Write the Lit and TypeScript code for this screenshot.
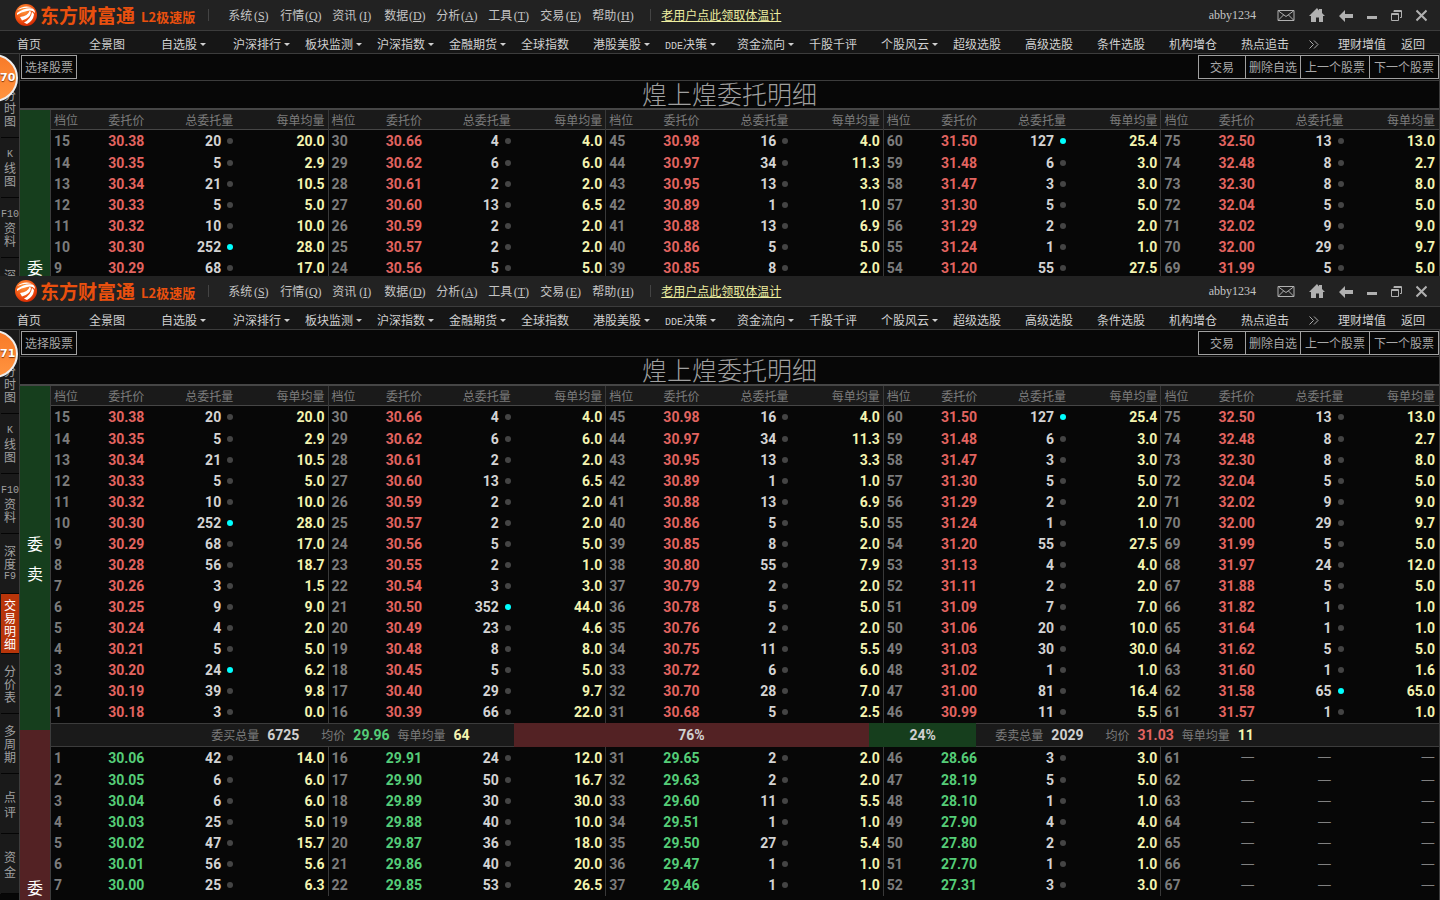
import { LitElement, html, css, svg, nothing } from "lit";
import { customElement, property } from "lit/decorators.js";
import { classMap } from "lit/directives/class-map.js";
import { styleMap } from "lit/directives/style-map.js";

type Quote = [level: number, price?: string, volume?: number, average?: string];

const parse = (start: number, step: number, text: string): Quote[] =>
  text.split(";").map((entry, i) => {
    const [price, volume, average] = entry.trim().split(" ");
    return [start + i * step, price, Number(volume), average];
  });

const SELL: Quote[][] = [
  parse(15, -1, "30.38 20 20.0;30.35 5 2.9;30.34 21 10.5;30.33 5 5.0;30.32 10 10.0;30.30 252 28.0;30.29 68 17.0;30.28 56 18.7;30.26 3 1.5;30.25 9 9.0;30.24 4 2.0;30.21 5 5.0;30.20 24 6.2;30.19 39 9.8;30.18 3 0.0"),
  parse(30, -1, "30.66 4 4.0;30.62 6 6.0;30.61 2 2.0;30.60 13 6.5;30.59 2 2.0;30.57 2 2.0;30.56 5 5.0;30.55 2 1.0;30.54 3 3.0;30.50 352 44.0;30.49 23 4.6;30.48 8 8.0;30.45 5 5.0;30.40 29 9.7;30.39 66 22.0"),
  parse(45, -1, "30.98 16 4.0;30.97 34 11.3;30.95 13 3.3;30.89 1 1.0;30.88 13 6.9;30.86 5 5.0;30.85 8 2.0;30.80 55 7.9;30.79 2 2.0;30.78 5 5.0;30.76 2 2.0;30.75 11 5.5;30.72 6 6.0;30.70 28 7.0;30.68 5 2.5"),
  parse(60, -1, "31.50 127 25.4;31.48 6 3.0;31.47 3 3.0;31.30 5 5.0;31.29 2 2.0;31.24 1 1.0;31.20 55 27.5;31.13 4 4.0;31.11 2 2.0;31.09 7 7.0;31.06 20 10.0;31.03 30 30.0;31.02 1 1.0;31.00 81 16.4;30.99 11 5.5"),
  parse(75, -1, "32.50 13 13.0;32.48 8 2.7;32.30 8 8.0;32.04 5 5.0;32.02 9 9.0;32.00 29 9.7;31.99 5 5.0;31.97 24 12.0;31.88 5 5.0;31.82 1 1.0;31.64 1 1.0;31.62 5 5.0;31.60 1 1.6;31.58 65 65.0;31.57 1 1.0"),
];

const BUY: Quote[][] = [
  parse(1, 1, "30.06 42 14.0;30.05 6 6.0;30.04 6 6.0;30.03 25 5.0;30.02 47 15.7;30.01 56 5.6;30.00 25 6.3"),
  parse(16, 1, "29.91 24 12.0;29.90 50 16.7;29.89 30 30.0;29.88 40 10.0;29.87 36 18.0;29.86 40 20.0;29.85 53 26.5"),
  parse(31, 1, "29.65 2 2.0;29.63 2 2.0;29.60 11 5.5;29.51 1 1.0;29.50 27 5.4;29.47 1 1.0;29.46 1 1.0"),
  parse(46, 1, "28.66 3 3.0;28.19 5 5.0;28.10 1 1.0;27.90 4 4.0;27.80 2 2.0;27.70 1 1.0;27.31 3 3.0"),
  [61, 62, 63, 64, 65, 66, 67].map((level): Quote => [level]),
];

const HOT_SELL_LEVELS = new Set([3, 10, 21, 60, 62]);
const BUY_TOTAL = 6725;
const SELL_TOTAL = 2029;

const MENUS = ["系统S", "行情Q", "资讯I", "数据D", "分析A", "工具T", "交易E", "帮助H"];

// A trailing "+" marks an entry that opens a submenu.
const NAV = [
  "首页", "全景图", "自选股+", "沪深排行+", "板块监测+", "沪深指数+", "金融期货+", "全球指数", "港股美股+",
  "DDE决策+", "资金流向+", "千股千评", "个股风云+", "超级选股", "高级选股", "条件选股", "机构增仓", "热点追击",
];

const TABS: string[][] = [
  ["分", "时", "图"], ["K", "线", "图"], ["F10", "资", "料"], ["深", "度", "F9"],
  ["交", "易", "明", "细"], ["分", "价", "表"], ["多", "周", "期"], ["点", "评"], ["资", "金"],
];
const ACTIVE_TAB = 4;

const WINDOW_ICONS = [
  { label: "邮件", w: 18, shape: svg`<path d="M1 1.500h16v10H1z M1.500 2L9 7.500 16.500 2 M6.500 6l-5 5 M11.500 6l5 5" transform="translate(0 1)"/>` },
  { label: "主页", w: 16, shape: svg`<path class="solid" d="M8 0L0 8h2v6h5V9.500h3V14h4V8h2l-3-3V1h-3v1.500z"/>` },
  { label: "后退", w: 14, shape: svg`<path class="solid" d="M0 8l6-6v4h8v4H6v4z"/>` },
  { label: "最小化", w: 10, shape: svg`<path class="solid" d="M0 8h10v3H0z"/>` },
  { label: "还原", w: 11, shape: svg`<path d="M.5 5.500h7v7h-7z M.5 6.500h7 M3 4V2.500h7.500v7H9 M3 3.500h7.500"/>` },
  { label: "关闭", w: 11, shape: svg`<path class="thick" d="M.5 2.500l10 10 M10.500 2.500l-10 10"/>` },
];

const sharedControls = css`
  button {
    appearance: none;
    margin: 0;
    padding: 0;
    border: 0;
    background: none;
    color: inherit;
    font: inherit;
  }
  a { color: inherit; text-decoration: none; }
`;

@customElement("quote-table")
class QuoteTable extends LitElement {
  @property({ attribute: false }) rows: Quote[] = [];
  @property() side: "sell" | "buy" = "sell";

  static styles = css`
    :host { display: block; min-width: 0; }
    table { width: 100%; border-collapse: separate; border-spacing: 0; table-layout: fixed; }
    th, td { box-sizing: border-box; padding: 0; text-align: right; white-space: nowrap; }
    th {
      height: 20px;
      border-bottom: 1px solid #464646;
      background: #1a1a1a;
      color: #7c7c7c;
      font-size: 12px;
      line-height: 18px;
      font-weight: 400;
    }
    td {
      height: 21px;
      font: 700 14px/21px Roboto, "Noto Sans CJK SC", sans-serif;
    }
    tr:first-child td { height: 23px; }
    .level { width: 15%; padding-left: 3px; text-align: left; }
    .price { width: 19%; padding-right: 1px; }
    .volume { width: 32%; padding-right: 1px; }
    .average { padding-right: 4px; }
    td.level { color: #7c7c7c; }
    td.price { color: #e26460; }
    .buy td.price { color: #55cd78; }
    td.volume { color: #d4d4d4; }
    td.average { color: #f4f4b0; }
    .empty td:not(.level) {
      color: #808080;
      font: 400 16px/17px "Noto Sans CJK SC", sans-serif;
      vertical-align: top;
    }
    .dot {
      display: inline-block;
      width: 6px;
      height: 6px;
      margin-left: 6px;
      border-radius: 3px;
      background: #444;
      vertical-align: 2px;
    }
    .dot.hot { background: #0ff; }
    .dot.none { background: none; }
  `;

  render() {
    const sell = this.side === "sell";
    return html`<table class=${this.side}>
      ${sell
        ? html`<thead><tr>
            <th class="level">档位</th><th class="price">委托价</th>
            <th class="volume">总委托量</th><th class="average">每单均量</th>
          </tr></thead>`
        : nothing}
      <tbody>
        ${this.rows.map(([level, price, volume, average]) => {
          const dot = { dot: true, hot: sell && HOT_SELL_LEVELS.has(level), none: !price };
          return html`<tr class=${price ? "" : "empty"}>
            <td class="level">${level}</td>
            <td class="price">${price ?? "—"}</td>
            <td class="volume">${price ? volume : "—"}<span class=${classMap(dot)}></span></td>
            <td class="average">${average ?? "—"}</td>
          </tr>`;
        })}
      </tbody>
    </table>`;
  }
}

@customElement("trade-window")
class TradeWindow extends LitElement {
  @property() badge = "";
  // The compact window lists only the topmost sell levels.
  @property({ type: Boolean }) compact = false;

  static styles = [
    sharedControls,
    css`
      :host {
        display: block;
        overflow: hidden;
        background: #070707;
        color: #c4c4c4;
        font-size: 12px;
        line-height: 16px;
        white-space: nowrap;
      }
      .titlebar {
        display: flex;
        align-items: center;
        height: 30px;
        padding: 0 13px 0 15px;
        background: #222;
      }
      .logo { display: flex; align-items: center; color: #ea500e; font-weight: 700; }
      .logo svg { width: 22px; height: 22px; margin-right: 3px; }
      .brand { font-size: 19px; line-height: 30px; }
      .edition { margin: 4px 0 0 6px; font-size: 13px; }
      .rule { width: 1px; height: 12px; background: #444; }
      .logo + .rule { margin: 0 19px 0 13px; }
      .menus { display: flex; gap: 10px; margin-right: 16px; }
      .key {
        display: inline-block;
        width: 18px;
        font-family: "Liberation Serif", serif;
        text-align: center;
      }
      .promo { margin-left: 10px; color: #eeeea0; text-decoration: underline; }
      .user { margin: 0 21px 0 auto; font-family: "Liberation Serif", serif; }
      .icons { display: flex; gap: 14px; }
      .icons button { display: block; }
      .icons svg { display: block; height: 15px; fill: none; stroke: #b0b0b0; }
      .solid { fill: #b0b0b0; stroke: none; }
      .thick { stroke-width: 2; }
      .nav {
        display: flex;
        align-items: center;
        height: 18px;
        padding: 4px 15px 0 17px;
        border: solid #3c3c3c;
        border-width: 1px 0;
        background: #161616;
        color: #d0d0d0;
      }
      .entries {
        flex: 1;
        display: grid;
        grid-template-columns: repeat(17, minmax(0, 1fr)) 68px;
      }
      .entries a { height: 16px; }
      .narrow { font-family: "Liberation Mono", monospace; font-size: 10px; }
      .caret::after {
        content: "";
        display: inline-block;
        margin-left: 3px;
        border: 3px solid transparent;
        border-top-color: currentColor;
        border-bottom: 0;
        vertical-align: 3px;
      }
      .more { width: 10px; margin-right: 19px; }
      .more svg { display: block; fill: none; stroke: #aaa; }
      .wealth { margin-right: 15px; }
      .body { display: flex; align-items: flex-start; }
      .side { position: relative; width: 18px; padding: 24px 0 0 1px; background: #1a1a1a; }
      .tab {
        display: flex;
        flex-direction: column;
        align-items: center;
        justify-content: center;
        box-sizing: border-box;
        width: 100%;
        height: 60px;
        border-bottom: 1px solid #050505;
        color: #a0a0a0;
        line-height: 13px;
      }
      .tab.pair { line-height: 15px; }
      .tab.active { background: #b8350a; color: #fff; }
      .badge {
        position: absolute;
        top: 0;
        left: -30px;
        box-sizing: border-box;
        width: 48px;
        height: 48px;
        padding-left: 28px;
        border: 2px solid #eee;
        border-radius: 50%;
        background: linear-gradient(#f87a28, #ff9440);
        color: #fff;
        font: 700 11px/44px "DejaVu Sans", sans-serif;
        text-shadow: 0 1px 1px #7a3000;
      }
      .main { flex: 1; min-width: 0; border: solid #3c3c3c; border-width: 0 1px; }
      .toolbar {
        display: flex;
        justify-content: space-between;
        padding: 1px 0 1px 1px;
        border-bottom: 1px solid #3c3c3c;
      }
      .toolbar button {
        box-sizing: border-box;
        height: 24px;
        padding: 0 3px;
        border: 1px solid #a0a0a0;
        color: #a8a8a8;
      }
      .actions { display: flex; }
      .actions button + button { border-left: 0; }
      .actions .wide { padding: 0 11px; }
      .actions .step { padding: 0 4px; }
      h1 {
        height: 27px;
        margin: 0;
        border-bottom: 2px solid #464646;
        color: #a0a0a0;
        font-size: 25px;
        line-height: 24px;
        font-weight: 300;
        text-align: center;
      }
      .book { display: flex; align-items: flex-start; }
      .bands { width: 30px; border-right: 1px solid #3c3c3c; color: #fff; font-size: 16px; line-height: 30px; }
      .band {
        display: flex;
        flex-direction: column;
        align-items: center;
        justify-content: center;
        height: 344px;
      }
      .ask { background: #163e1d; }
      .bid { background: #532224; }
      .tables { flex: 1; min-width: 0; }
      .blocks { display: grid; grid-template-columns: repeat(5, minmax(0, 1fr)); }
      .blocks quote-table + quote-table { box-shadow: -1px 0 #383838; }
      .summary { display: grid; grid-template-columns: repeat(3, minmax(0, 1fr)); height: 24px; }
      .totals {
        display: flex;
        align-items: center;
        gap: 8px;
        border: solid #3c3c3c;
        border-width: 1px 0;
        background: #1a1a1a;
        color: #7c7c7c;
      }
      .totals.left { justify-content: flex-end; padding-right: 44px; }
      .totals.right { padding-left: 19px; }
      .totals b, .share { font: 700 14px/20px Roboto, sans-serif; color: #d0d0d0; }
      .totals .total { margin-right: 14px; }
      .totals .up { color: #e26460; }
      .totals .down { color: #55cd78; }
      .totals .avg { color: #f4f4b0; }
      .ratio { display: flex; }
      .share { display: grid; place-items: center; }
      .share.ask { flex: 1; }
    `,
  ];

  private logo() {
    return html`<svg viewBox="0 0 22 22" aria-hidden="true">
      <defs>
        <radialGradient id="ball" cx=".4" cy=".3" r=".8">
          <stop offset="0" stop-color="#ff9a3c"></stop>
          <stop offset=".6" stop-color="#f04e10"></stop>
          <stop offset="1" stop-color="#c81e00"></stop>
        </radialGradient>
      </defs>
      <circle cx="11" cy="11" r="11" fill="url(#ball)"></circle>
      <path fill="#fff" d="M2 6Q9 .5 17 3.500Q8 3 2 6zM2 9Q10 3 17.500 4.500Q20 5.500 20 9Q17 5.500 12 7Q6 8 2 11zM5 13Q13 12 14.500 7Q15.500 7 16 8Q15.500 14 7 16.500zM9 18.500Q16 15 17 8Q18.500 8.500 19 10.500Q18 17 12 20z"></path>
    </svg>`;
  }

  private entry(label: string) {
    const sub = label.endsWith("+");
    const text = sub ? label.slice(0, -1) : label;
    const latin = text.match(/^[A-Z]+/)?.[0];
    return html`<a href="#" class=${sub ? "caret" : ""}>${latin
      ? html`<span class="narrow">${latin}</span>${text.slice(latin.length)}`
      : text}</a>`;
  }

  private lowerBook() {
    const buyShare = (BUY_TOTAL / (BUY_TOTAL + SELL_TOTAL)) * 100;
    return html`
      <div class="summary">
        <div class="totals left">
          <span>委买总量</span><b class="total">${BUY_TOTAL}</b>
          <span>均价</span><b class="down">29.96</b>
          <span>每单均量</span><b class="avg">64</b>
        </div>
        <div class="ratio">
          <span class="share bid" style=${styleMap({ width: `${buyShare}%` })}>76%</span>
          <span class="share ask">24%</span>
        </div>
        <div class="totals right">
          <span>委卖总量</span><b class="total">${SELL_TOTAL}</b>
          <span>均价</span><b class="up">31.03</b>
          <span>每单均量</span><b class="avg">11</b>
        </div>
      </div>
      <div class="blocks">${BUY.map((rows) => html`<quote-table side="buy" .rows=${rows}></quote-table>`)}</div>
    `;
  }

  render() {
    const tabs = this.compact ? TABS.slice(0, 4) : TABS;
    const sell = this.compact ? SELL.map((rows) => rows.slice(0, 7)) : SELL;
    return html`
      <header class="titlebar">
        <div class="logo">${this.logo()}<span class="brand">东方财富通</span><span class="edition">L2极速版</span></div>
        <span class="rule"></span>
        <div class="menus">
          ${MENUS.map((m) => html`<button>${m.slice(0, 2)}<span class="key">(<u>${m[2]}</u>)</span></button>`)}
        </div>
        <span class="rule"></span>
        <a class="promo" href="#">老用户点此领取体温计</a>
        <span class="user">abby1234</span>
        <div class="icons">
          ${WINDOW_ICONS.map((i) => html`<button aria-label=${i.label}>
            <svg width=${i.w} height="15" viewBox="0 0 ${i.w} 15">${i.shape}</svg>
          </button>`)}
        </div>
      </header>
      <nav class="nav">
        <div class="entries">${NAV.map((n) => this.entry(n))}</div>
        <button class="more" aria-label="更多">
          <svg width="10" height="9" viewBox="0 0 10 9"><path d="M.5 .5l4 4-4 4M5 .5l4 4-4 4"></path></svg>
        </button>
        <a class="wealth" href="#">理财增值</a><a href="#">返回</a>
      </nav>
      <div class="body">
        <div class="side">
          ${tabs.map((tab, i) => html`<button class=${classMap({ tab: true, pair: tab.length === 2, active: i === ACTIVE_TAB })}>
            ${tab.map((part) => html`<span class=${/[A-Z]/.test(part) ? "narrow" : ""}>${part}</span>`)}
          </button>`)}
          <span class="badge">${this.badge}</span>
        </div>
        <main class="main">
          <div class="toolbar">
            <button>选择股票</button>
            <div class="actions">
              <button class="wide">交易</button><button>删除自选</button>
              <button class="step">上一个股票</button><button class="step">下一个股票</button>
            </div>
          </div>
          <h1>煌上煌委托明细</h1>
          <div class="book">
            <div class="bands">
              <div class="band ask"><span>委</span><span>卖</span></div>
              ${this.compact ? nothing : html`<div class="band bid"><span>委</span><span>买</span></div>`}
            </div>
            <div class="tables">
              <div class="blocks">${sell.map((rows) => html`<quote-table side="sell" .rows=${rows}></quote-table>`)}</div>
              ${this.compact ? nothing : this.lowerBook()}
            </div>
          </div>
        </main>
      </div>
    `;
  }
}

@customElement("app-root")
class AppRoot extends LitElement {
  static styles = css`
    :host {
      display: grid;
      grid-template-rows: 276px minmax(0, 1fr);
      height: 100vh;
      overflow: hidden;
      background: #070707;
      font-family: "Noto Sans CJK SC", sans-serif;
    }
  `;

  render() {
    return html`<trade-window badge="70" compact></trade-window><trade-window badge="71"></trade-window>`;
  }
}
